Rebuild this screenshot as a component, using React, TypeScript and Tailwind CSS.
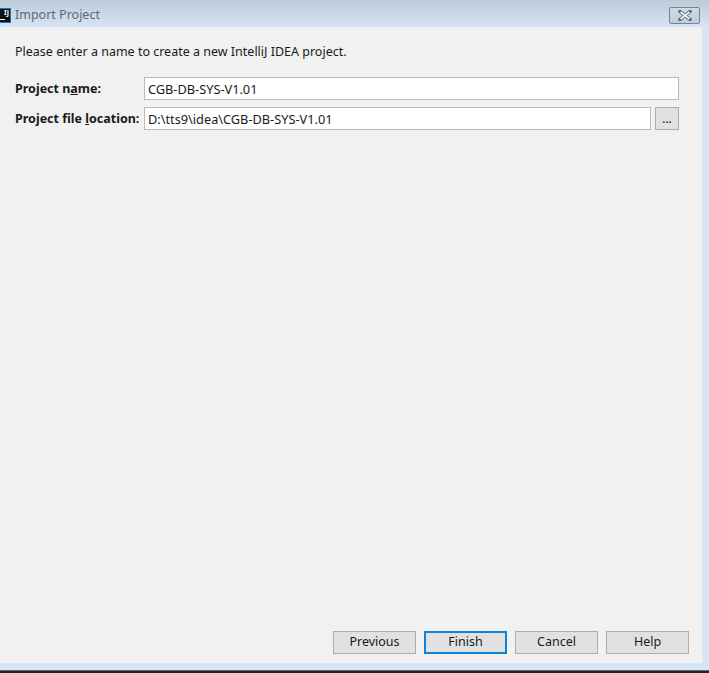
const font = { fontFamily: '"Noto Sans", "Open Sans", sans-serif' };

function DialogButton({ label, primary }: { label: string; primary?: boolean }) {
  return (
    <button
      type="button"
      className={`h-[23px] w-[83px] bg-[#e1e1e1] pb-[2px] text-[12.5px] leading-[15px] text-[#1a1a1a] ${
        primary ? "border-2 border-[#0a84d8]" : "border border-[#adadad]"
      }`}
    >
      {label}
    </button>
  );
}

function CloseIcon() {
  return (
    <svg width="14" height="11" viewBox="0 0 14 11">
      <path
        d="M2 1.5 L12 9.5 M12 1.5 L2 9.5"
        stroke="#5d6670"
        strokeWidth="3.4"
        strokeLinecap="square"
      />
      <path d="M2.5 2 L11.5 9 M11.5 2 L2.5 9" stroke="#f4f6f8" strokeWidth="1.6" />
    </svg>
  );
}

export default function App() {
  return (
    <div
      style={font}
      className="flex h-[673px] w-[709px] flex-col overflow-hidden bg-[#d8e6f4] text-[12.5px] text-[#1a1a1a]"
    >
      {/* Title bar */}
      <div className="flex h-[27px] shrink-0 items-center bg-gradient-to-b from-[#bccbda] to-[#d6e5f3] pr-[9px] pt-[4px]">
        <div className="flex h-[15px] w-[11px] flex-col items-end overflow-hidden border border-l-0 border-[#1273d6] bg-[#111111] pr-[1px] text-[7px] font-bold leading-[8px] text-white">
          IJ
          <div className="mt-[2px] h-[1px] w-[5px] self-start bg-white" />
        </div>
        <span className="ml-[4px] text-[#5c6a76]">Import Project</span>
        <div className="ml-auto flex h-[17px] w-[31px] items-center justify-center rounded-[2px] border border-[#77818c] bg-gradient-to-b from-[#cfdbe7] to-[#bfcddc]">
          <CloseIcon />
        </div>
      </div>

      {/* Dialog content */}
      <div className="flex min-h-0 flex-1">
        <div className="flex w-[702px] flex-col bg-[#f1f1f1] pb-[9px] pl-[15px] pr-[23px] pt-[15px]">
          <p className="leading-[19px]">Please enter a name to create a new IntelliJ IDEA project.</p>

          <div className="mt-[16px] flex h-[23px] items-center">
            <label className="w-[129px] shrink-0 whitespace-nowrap pt-[1px] font-bold">
              Project n<span className="underline">a</span>me:
            </label>
            <input
              readOnly
              value="CGB-DB-SYS-V1.01"
              className="h-[23px] flex-1 border border-[#b9b9b9] bg-white px-[3px] text-[12.75px] outline-none"
            />
          </div>

          <div className="mt-[7px] flex h-[23px] items-center">
            <label className="w-[129px] shrink-0 whitespace-nowrap pt-[1px] font-bold">
              Project file <span className="underline">l</span>ocation:
            </label>
            <input
              readOnly
              value="D:\tts9\idea\CGB-DB-SYS-V1.01"
              className="h-[23px] min-w-0 flex-1 border border-[#b9b9b9] bg-white px-[3px] text-[12.75px] outline-none"
            />
            <button
              type="button"
              className="ml-[4px] h-[23px] w-[24px] border border-[#adadad] bg-[#e1e1e1] text-[11px] font-bold leading-[19px] text-[#33334d]"
            >
              ...
            </button>
          </div>

          <div className="mt-auto flex justify-end">
            <div className="mr-[-10px] flex gap-[8px]">
              <DialogButton label="Previous" />
              <DialogButton label="Finish" primary />
              <DialogButton label="Cancel" />
              <DialogButton label="Help" />
            </div>
          </div>
        </div>
      </div>

      {/* Window frame and what lies behind it */}
      <div className="h-[7px] shrink-0" />
      <div className="h-[3px] shrink-0 border-t border-[#6b6b6b] bg-[#242424]" />
    </div>
  );
}
